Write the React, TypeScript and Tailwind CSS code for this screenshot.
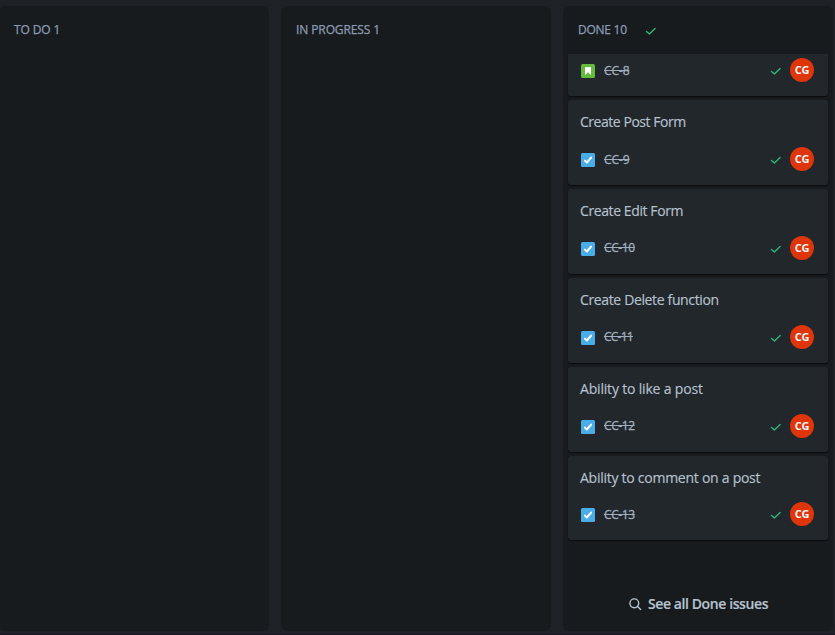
const FONT = "font-['Segoe_UI','Open_Sans',sans-serif]";

type Issue = { id: string; title: string; height: string; titleTracking: string; gap: string; idPad: string; idTracking: string };

const issues: Issue[] = [
  { id: "CC-9", title: "Create Post Form", height: "h-[85px]", titleTracking: "tracking-[-0.46px]", gap: "mb-[15px]", idPad: "pt-px", idTracking: "tracking-[-0.1px]" },
  { id: "CC-10", title: "Create Edit Form", height: "h-[85px]", titleTracking: "tracking-[-0.4px]", gap: "mb-[15px]", idPad: "pt-0", idTracking: "tracking-[-0.4px]" },
  { id: "CC-11", title: "Create Delete function", height: "h-[85px]", titleTracking: "tracking-[-0.36px]", gap: "mb-[15px]", idPad: "pt-0", idTracking: "tracking-[-0.75px]" },
  { id: "CC-12", title: "Ability to like a post", height: "h-[85px]", titleTracking: "tracking-[-0.18px]", gap: "mb-[15px]", idPad: "pt-0", idTracking: "tracking-[-0.4px]" },
  { id: "CC-13", title: "Ability to comment on a post", height: "h-[84px]", titleTracking: "tracking-[-0.26px]", gap: "mb-[14px]", idPad: "pt-px", idTracking: "tracking-[-0.4px]" },
];

function DoneTick() {
  return (
    <svg width="12" height="10" viewBox="0 0 12 10" fill="none" stroke="#2bb57c" strokeWidth="1.4" strokeLinecap="round" strokeLinejoin="round">
      <path d="M1.5 5.4 4.4 8 10.1 2.4" />
    </svg>
  );
}

function TaskIcon() {
  return (
    <svg width="14" height="14" viewBox="0 0 14 14" fill="none">
      <rect width="14" height="14" rx="1.5" fill="#4bade8" />
      <path d="M3.9 7.6 5.9 9.5 10.1 4.6" stroke="#fff" strokeWidth="2" strokeLinecap="round" strokeLinejoin="round" />
    </svg>
  );
}

function StoryIcon() {
  return (
    <svg width="14" height="14" viewBox="0 0 14 14">
      <rect width="14" height="14" rx="1.5" fill="#63ba3c" />
      <path d="M4.6 3h4.8c.4 0 .6.2.6.6V11L7 8.3 4 11V3.6c0-.4.2-.6.6-.6Z" fill="#fff" />
    </svg>
  );
}

function IssueFooter({ id, idPad, idTracking, story }: { id: string; idPad: string; idTracking: string; story?: boolean }) {
  return (
    <div className="flex h-6 items-center">
      <span className="ml-px mt-[2px]">{story ? <StoryIcon /> : <TaskIcon />}</span>
      <span className={`ml-[9px] h-4 text-[12px] leading-4 text-[#9fadbc] line-through [-webkit-text-stroke:0.3px_#9fadbc] ${idPad} ${idTracking}`}>{id}</span>
      <span className="ml-auto mt-[2px]"><DoneTick /></span>
      <span className="ml-2 flex size-6 items-center justify-center rounded-full bg-[#de350b] pb-px text-[11px] font-bold leading-none tracking-[-0.2px] text-[#f4f5f7]">CG</span>
    </div>
  );
}

function Column({ title, children }: { title: React.ReactNode; children?: React.ReactNode }) {
  return (
    <section className="flex h-[625px] w-[270px] shrink-0 flex-col rounded-md bg-[#171b1d]">
      <header className="flex h-12 items-center pl-[15px] text-[12px] leading-4 tracking-[-0.1px] text-[#8c9bb5] [-webkit-text-stroke:0.25px_#8c9bb5]">{title}</header>
      {children}
    </section>
  );
}

export default function App() {
  return (
    <main className={`${FONT} h-[635px] w-[835px] overflow-hidden border-b border-[#181720] bg-[#1e2125] pt-[6px]`}>
      <div className="-ml-px flex gap-3">
        <Column title="TO DO 1" />
        <Column title="IN PROGRESS 1" />
        <Column title={<><span className="w-[49px] whitespace-nowrap tracking-[-0.25px]">DONE 10</span><span className="ml-[18px] mt-[2px]"><DoneTick /></span></>}>
          <div className="flex flex-col gap-1 px-[5px]">
            <article className="h-[42px] rounded-b-[3px] bg-[#22272b] pl-3 pr-[14px] pt-1 shadow-[0_1px_1px_#0b0d0f]">
              <IssueFooter id="CC-8" idPad="pt-px" idTracking="tracking-[-0.1px]" story />
            </article>
            {issues.map((issue) => (
              <article key={issue.id} className={`${issue.height} rounded-[3px] bg-[#22272b] pl-3 pr-[14px] pt-3 shadow-[0_1px_1px_#0b0d0f]`}>
                <h3 className={`h-5 whitespace-nowrap text-[14px] leading-5 text-[#b6c2cf] [-webkit-text-stroke:0.15px_#b6c2cf] ${issue.gap} ${issue.titleTracking}`}>{issue.title}</h3>
                <IssueFooter id={issue.id} idPad={issue.idPad} idTracking={issue.idTracking} />
              </article>
            ))}
          </div>
          <div className="mt-[54px] flex h-5 items-center justify-center gap-[6px] pl-px text-[#b6c2cf]">
            <svg width="13" height="13" viewBox="0 0 13 13" fill="none" stroke="currentColor" strokeWidth="1.4" strokeLinecap="round">
              <circle cx="5.3" cy="5.3" r="4.4" />
              <path d="m8.6 8.6 3 3" />
            </svg>
            <span className="whitespace-nowrap text-[14px] font-semibold leading-5 tracking-[-0.4px] [-webkit-text-stroke:0.15px_#b6c2cf]">See all Done issues</span>
          </div>
        </Column>
      </div>
    </main>
  );
}
